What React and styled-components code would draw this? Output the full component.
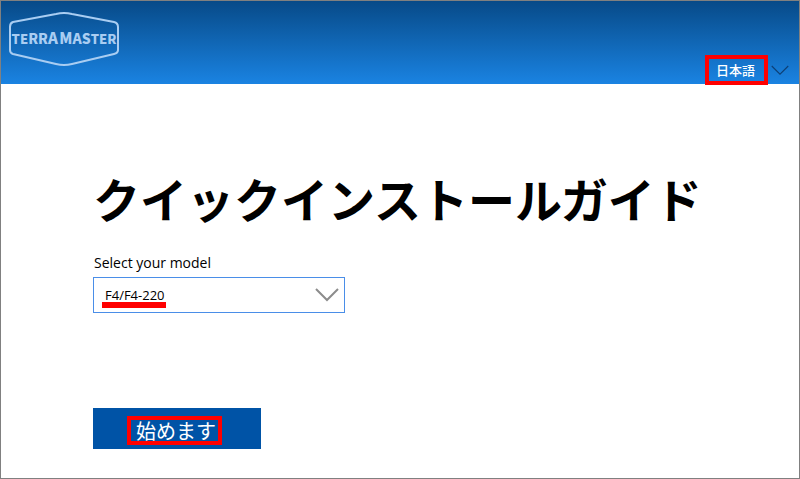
import React, { useState } from 'react';
import styled, { createGlobalStyle } from 'styled-components';

const GlobalStyle = createGlobalStyle`
  * {
    box-sizing: border-box;
  }
  body {
    margin: 0;
    background: #fff;
    color: #000;
    font-family: "Open Sans", "Noto Sans CJK JP", sans-serif;
  }
`;

// the letters grow towards the middle of the badge
const logoLetters = [
  { char: 'T', size: 13 },
  { char: 'E', size: 13 },
  { char: 'R', size: 14 },
  { char: 'R', size: 14 },
  { char: 'A', size: 15 },
  { char: ' ', size: 6 },
  { char: 'M', size: 15 },
  { char: 'A', size: 14 },
  { char: 'S', size: 14 },
  { char: 'T', size: 13 },
  { char: 'E', size: 13 },
  { char: 'R', size: 13 },
];

function Logo() {
  return (
    <LogoSvg viewBox="0 0 112 56" role="img" aria-label="TERRA MASTER">
      <path
        d="M5 11 L48 3 Q56 1 64 3 L106 11 Q110 12 110 16 V39 Q110 42 106 43 L64 53 Q56 55 48 53 L5 43 Q2 42 2 39 V16 Q2 12 5 11 Z"
        fill="none"
        stroke="#a9cdf2"
        strokeWidth="2"
      />
      <LogoText x="56" y="33" textAnchor="middle">
        {logoLetters.map(({ char, size }, i) => (
          <tspan key={i} fontSize={size}>
            {char}
          </tspan>
        ))}
      </LogoText>
    </LogoSvg>
  );
}

function Chevron({ className, strokeWidth = 2 }) {
  return (
    <svg className={className} viewBox="0 0 24 14" aria-hidden="true">
      <path d="M1 1 L12 12 L23 1" fill="none" stroke="currentColor" strokeWidth={strokeWidth} />
    </svg>
  );
}

function App() {
  const [language, setLanguage] = useState('ja');
  const [model, setModel] = useState('F4/F4-220');

  return (
    <Page>
      <GlobalStyle />
      <Header>
        <Logo />
        <LanguagePicker>
          <Highlight>
            <LanguageSelect
              aria-label="日本語"
              value={language}
              onChange={e => setLanguage(e.target.value)}
            >
              <option value="ja">日本語</option>
            </LanguageSelect>
          </Highlight>
          <LanguageChevron strokeWidth={1.5} />
        </LanguagePicker>
      </Header>
      <Main>
        <Title>クイックインストールガイド</Title>
        <Label htmlFor="model">Select your model</Label>
        <ModelField>
          <ModelSelect id="model" value={model} onChange={e => setModel(e.target.value)}>
            <option>F4/F4-220</option>
          </ModelSelect>
          <Underline />
          <ModelChevron />
        </ModelField>
        <StartButton type="button">
          <Highlight>始めます</Highlight>
        </StartButton>
      </Main>
    </Page>
  );
}

export default App;

const Page = styled.div`
  min-height: 100vh;
  border: 1px solid #808080;
`;

const Header = styled.header`
  display: flex;
  justify-content: space-between;
  height: 83px;
  padding: 10px 10px 0 7px;
  background: linear-gradient(#074a88, #1a83e2);
`;

const LogoSvg = styled.svg`
  width: 112px;
  height: 56px;
`;

const LogoText = styled.text`
  fill: #a9cdf2;
  font-family: "Noto Sans CJK JP", sans-serif;
  font-weight: 900;
`;

const LanguagePicker = styled.div`
  display: flex;
  align-self: flex-end;
  align-items: center;
  gap: 3px;
  margin-bottom: -1px;
`;

const Highlight = styled.span`
  display: inline-flex;
  align-items: center;
  border: 4px solid #f00;
`;

const LanguageSelect = styled.select`
  appearance: none;
  width: 55px;
  height: 22px;
  padding: 0 0 2px 7px;
  border: 0;
  background: transparent;
  color: #fff;
  font: 500 13px "Noto Sans CJK JP", sans-serif;
`;

const LanguageChevron = styled(Chevron)`
  width: 18px;
  height: 11px;
  color: #0d3f75;
`;

const Main = styled.main`
  display: flex;
  flex-direction: column;
  align-items: flex-start;
  padding: 79px 24px 28px 92px;
`;

const Title = styled.h1`
  margin: 0;
  font: 700 47px/70px "Noto Sans CJK JP", sans-serif;
`;

const Label = styled.label`
  margin-top: 18px;
  padding-left: 1px;
  font-size: 14px;
  line-height: 24px;
`;

const ModelField = styled.div`
  position: relative;
  width: 252px;
  max-width: 100%;
  margin-top: 2px;
`;

const ModelSelect = styled.select`
  appearance: none;
  display: block;
  width: 100%;
  height: 36px;
  padding: 0 40px 0 11px;
  border: 1px solid #4a8ee8;
  border-radius: 0;
  background: #fff;
  color: #000;
  font: 13px "Open Sans", sans-serif;
`;

const Underline = styled.span`
  position: absolute;
  left: 9px;
  bottom: 5px;
  width: 64px;
  height: 6px;
  background: #f00;
  pointer-events: none;
`;

const ModelChevron = styled(Chevron)`
  position: absolute;
  top: 11px;
  right: 6px;
  width: 24px;
  height: 14px;
  color: #8c8c8c;
  pointer-events: none;
`;

const StartButton = styled.button`
  display: flex;
  align-items: center;
  justify-content: center;
  width: 168px;
  height: 41px;
  margin-top: 95px;
  padding: 4px 5px 0 0;
  border: 0;
  background: #0053a6;
  color: #fff;
  font: 20px/21px "Noto Sans CJK JP", sans-serif;

  ${Highlight} {
    padding: 0 2px 0 5px;
  }
`;
